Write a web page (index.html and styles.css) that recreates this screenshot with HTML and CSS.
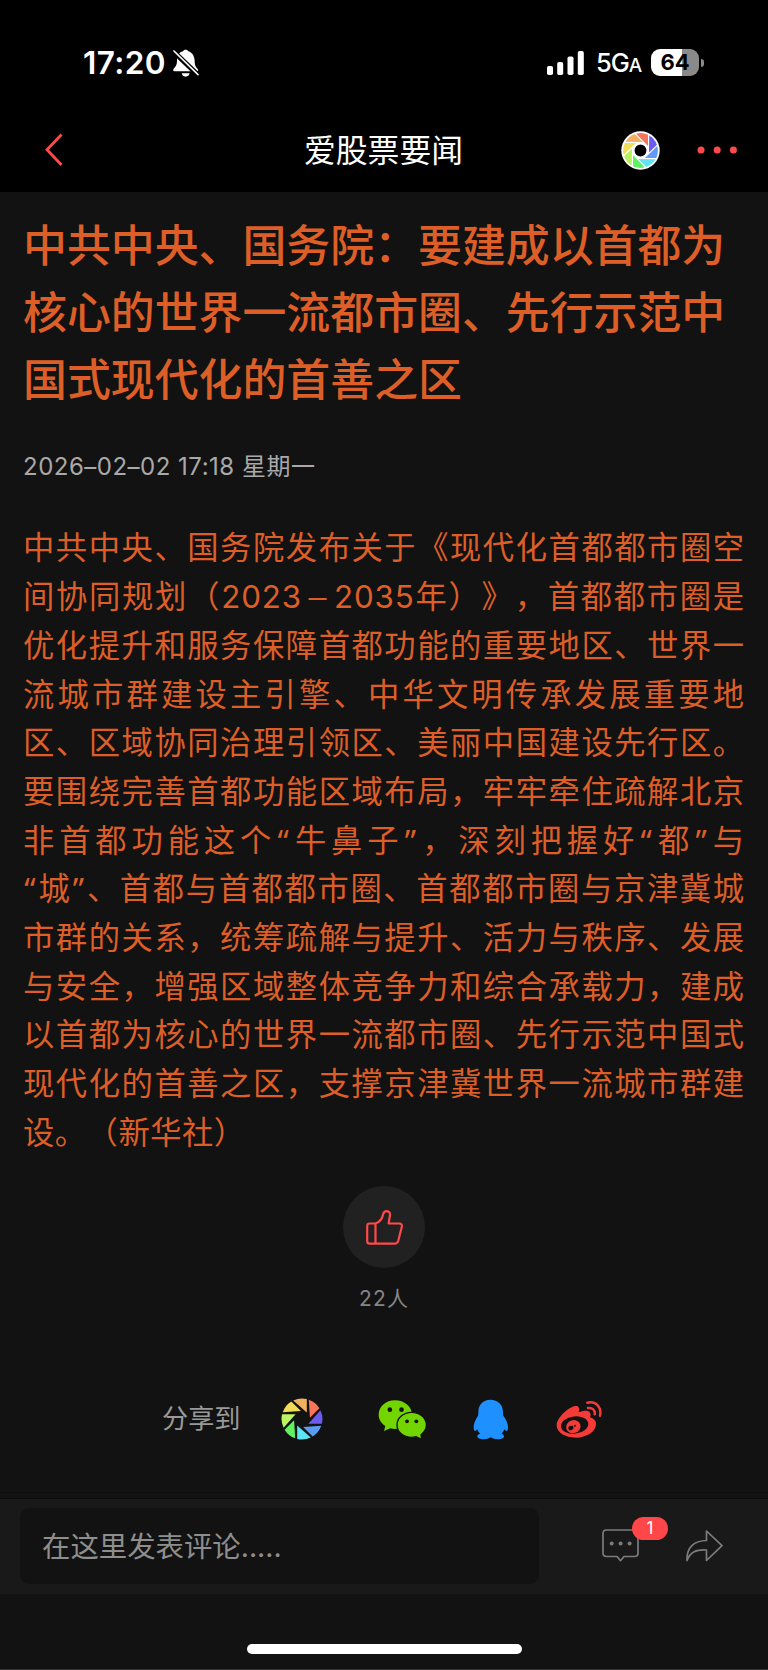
FILE: index.html
```html
<!DOCTYPE html>
<html lang="zh-CN">
<head>
    <meta charset="UTF-8">
    <meta name="viewport" content="width=device-width, initial-scale=1.0">
    <title>爱股票要闻</title>
    <link rel="stylesheet" href="styles.css">
</head>
<body>

    <!-- Barra de estado -->
    <div class="status-bar">
        <span class="status-time">17:20</span>
        <svg class="icon-bell" viewBox="0 0 78 84">
            <path fill="#fff" d="M38 2c4 0 7 2 8 5 13 4 18 15 19 29 0 13 3 18 9 24 3 4 1 7-3 7H5c-4 0-6-4-3-8 8-8 10-12 10-25C13 18 18 10 30 7c1-3 4-5 8-5zM26 73h24c-1 6-6 10-12 10s-11-4-12-10z"/>
            <path stroke="#000" stroke-width="15" d="M1 7l77 74"/>
            <path stroke="#fff" stroke-width="5" stroke-linecap="round" d="M3 6l72 71"/>
        </svg>
        <svg class="icon-signal" viewBox="0 0 37 24" fill="#fff">
            <rect x="0" y="15" width="6" height="9" rx="1.8"/>
            <rect x="10.2" y="11" width="6" height="13" rx="1.8"/>
            <rect x="20.5" y="5.5" width="6" height="18.5" rx="1.8"/>
            <rect x="30.8" y="0" width="6" height="24" rx="1.8"/>
        </svg>
        <span class="status-net">5G<small>A</small></span>
        <span class="battery">64</span>
        <span class="battery-tip"></span>
    </div>

    <!-- Cabecera -->
    <header class="navbar">
        <svg class="icon-back" viewBox="0 0 18 34">
            <path d="M16.500 1.500L2 16.700L16.500 32" fill="none" stroke="#ff4a4b" stroke-width="2.8"/>
        </svg>
        <h2 class="navbar-title">爱股票要闻</h2>
        <svg class="icon-moments" viewBox="-19.5 -19.5 39 39">
            <defs>
                <path id="blade" d="M-4.4-16.8A17.4 17.4 0 0 1 7.5-15.7V-4.500Z"/>
            </defs>
            <circle r="19.2" fill="#fff"/>
            <use href="#blade" fill="#f8745a"/>
            <use href="#blade" fill="#6a5af2" transform="rotate(45)"/>
            <use href="#blade" fill="#5e9af7" transform="rotate(90)"/>
            <use href="#blade" fill="#60e4f3" transform="rotate(135)"/>
            <use href="#blade" fill="#60f160" transform="rotate(180)"/>
            <use href="#blade" fill="#b9f05f" transform="rotate(225)"/>
            <use href="#blade" fill="#f2de5b" transform="rotate(270)"/>
            <use href="#blade" fill="#f1b063" transform="rotate(315)"/>
            <circle r="6.6" fill="#000" stroke="#fff" stroke-width="1.3"/>
        </svg>
        <svg class="icon-more" viewBox="0 0 40 8" fill="#ff4a4b">
            <circle cx="4" cy="4" r="3.5"/>
            <circle cx="20.2" cy="4" r="3.5"/>
            <circle cx="36.4" cy="4" r="3.5"/>
        </svg>
    </header>

    <!-- Noticia -->
    <main class="article">
        <h1>中共中央、国务院：要建成以首都为<br>核心的世界一流都市圈、先行示范中<br>国式现代化的首善之区</h1>
        <p class="date">2026–02–02 17:18 星期一</p>

        <p class="content">
            <span>中共中央、国务院发布关于《现代化首都都市圈空</span>
            <span>间协同规划（2023<i class="dash">－</i>2035年）》，首都都市圈是</span>
            <span>优化提升和服务保障首都功能的重要地区、世界一</span>
            <span>流城市群建设主引擎、中华文明传承发展重要地</span>
            <span>区、区域协同治理引领区、美丽中国建设先行区。</span>
            <span>要围绕完善首都功能区域布局，牢牢牵住疏解北京</span>
            <span>非首都功能这个<i>“</i>牛鼻子<i>”</i>，深刻把握好<i>“</i>都<i>”</i>与</span>
            <span><i>“</i>城<i>”</i>、首都与首都都市圈、首都都市圈与京津冀城</span>
            <span>市群的关系，统筹疏解与提升、活力与秩序、发展</span>
            <span>与安全，增强区域整体竞争力和综合承载力，建成</span>
            <span>以首都为核心的世界一流都市圈、先行示范中国式</span>
            <span>现代化的首善之区，支撑京津冀世界一流城市群建</span>
            <span class="last">设。（新华社）</span>
        </p>
    </main>

    <!-- Me gusta -->
    <div class="like">
        <div class="like-btn">
            <svg class="icon-like" viewBox="0 0 37 35" fill="none" stroke="#ff4a4b" stroke-width="2.2" stroke-linejoin="round">
                <path d="M9.5 13.5H3.6Q1.2 13.5 1.2 16V31.3Q1.2 33.7 3.6 33.7H28.5Q31.4 33.7 32.2 31L35.8 16.8Q36.4 13.5 33.2 13.5H22.6L24 5Q24.3 1.3 20.7 1.2Q18 1.2 17.2 4C16.3 8.5 14.5 12 9.5 13.5V33.7"/>
            </svg>
        </div>
        <span class="like-count">22人</span>
    </div>

    <!-- Compartir -->
    <div class="share">
        <span class="share-label">分享到</span>
        <svg class="icon-shutter" viewBox="-21 -21 42 42">
            <defs>
                <path id="blade2" d="M-8.8-18.4A20.4 20.4 0 0 1 4.8-19.9V-6.400Z"/>
            </defs>
            <use href="#blade2" fill="#f2b15f"/>
            <use href="#blade2" fill="#f77559" transform="rotate(45)"/>
            <use href="#blade2" fill="#6d5bf0" transform="rotate(90)"/>
            <use href="#blade2" fill="#5b9bf5" transform="rotate(135)"/>
            <use href="#blade2" fill="#5ce4f4" transform="rotate(180)"/>
            <use href="#blade2" fill="#60f060" transform="rotate(225)"/>
            <use href="#blade2" fill="#bcf362" transform="rotate(270)"/>
            <use href="#blade2" fill="#f2da58" transform="rotate(315)"/>
        </svg>
        <svg class="icon-wechat" viewBox="24 56 147 120">
            <path fill="#72d500" d="M75 60c28 0 51 19 51 43s-23 43-51 43c-5 0-10-1-14-2l-19 8 4-15c-12-8-20-20-20-34 0-24 21-43 49-43z"/>
            <circle cx="59.500" cy="88" r="7" fill="#121212"/>
            <circle cx="94.500" cy="88" r="7" fill="#121212"/>
            <path fill="#72d500" stroke="#121212" stroke-width="4" d="M125 96c25 0 44 17 44 38 0 12-7 22-16 29l2 14-17-8c-4 1-8 2-13 2-25 0-44-16-44-37s19-38 44-38z"/>
            <circle cx="111" cy="123" r="5.700" fill="#121212"/>
            <circle cx="139" cy="123" r="5.700" fill="#121212"/>
        </svg>
        <svg class="icon-qq" viewBox="310 57 105 123">
            <path fill="#1f90ff" d="M362 59c-22 0-36 15-36 37 0 5 0 7-1 11-8 13-13 23-13 34 0 7 1 11 4 12 3 0 5-3 7-5 2 6 4 9 8 13-5 2-8 4-8 8 0 6 8 9 18 9 9 0 17-2 22-6 5 4 13 6 22 6 10 0 18-3 18-9 0-4-3-6-7-8 4-4 6-8 8-13 2 2 4 5 7 5 3-1 4-5 4-12 0-11-5-21-14-34-1-4-1-6-1-11 0-22-15-37-38-37z"/>
        </svg>
        <svg class="icon-weibo" viewBox="560 60 138 114">
            <path fill="#f53b38" d="M562 136c0-20 30-50 52-57 13-4 18 3 14 18 13-5 29-8 34 1 3 5 2 10 0 14 11 4 18 9 18 20 0 23-28 41-60 41-33 0-58-15-58-37z"/>
            <ellipse cx="616" cy="135" rx="41" ry="26" fill="#121212" transform="rotate(-7 616 135)"/>
            <ellipse cx="612" cy="140" rx="22" ry="19.500" fill="#f53b38" transform="rotate(-18 612 140)"/>
            <ellipse cx="605" cy="144" rx="8" ry="6.500" fill="#121212" transform="rotate(-25 605 144)"/>
            <circle cx="617" cy="137" r="3" fill="#121212"/>
            <path fill="none" stroke="#f53b38" stroke-width="7.500" stroke-linecap="round" d="M654 68c24-6 44 12 38 39M656 84c13-2 22 6 20 19"/>
        </svg>
    </div>

    <!-- Barra de comentarios -->
    <footer class="comment-bar">
        <div class="comment-input">在这里发表评论.....</div>
        <div class="comment-icon">
            <svg viewBox="0 0 37 34" fill="none" stroke="#7c7c7c" stroke-width="1.7" stroke-linejoin="round">
                <path d="M4.500 1H32.500Q36 1 36 4.500V24Q36 27.500 32.500 27.500H22L18.500 31.700L15 27.500H4.500Q1 27.500 1 24V4.500Q1 1 4.500 1Z"/>
                <g fill="#7c7c7c" stroke="none">
                    <circle cx="9.700" cy="14.400" r="2"/>
                    <circle cx="18.600" cy="14.400" r="2"/>
                    <circle cx="27.600" cy="14.400" r="2"/>
                </g>
            </svg>
            <span class="badge">1</span>
        </div>
        <svg class="icon-forward" viewBox="0 0 37 32" fill="none" stroke="#7c7c7c" stroke-width="1.700" stroke-linejoin="round">
            <path d="M20.500 1L36 15.700L20.500 30.500V20C10 19.500 4.500 21.500 1 30.500C0.500 17.500 8 10.700 20.500 10.500Z"/>
        </svg>
    </footer>

    <div class="home-area">
        <div class="home-indicator"></div>
    </div>

</body>
</html>
```
FILE: styles.css
```css
/* Estilos generales */
* {
    box-sizing: border-box;
}

body {
    font-family: Inter, "Noto Sans CJK SC", sans-serif;
    margin: 0;
    padding: 0;
    height: 1670px;
    background-color: #121212;
    color: #fff;
    overflow: hidden;
    display: flex;
    flex-direction: column;
    text-spacing-trim: space-all;
}

svg {
    display: block;
    flex: none;
}

h1, h2, p {
    margin: 0;
}

/* Barra de estado */
.status-bar {
    height: 108px;
    padding: 17px 64px 0 83px;
    background-color: #000;
    display: flex;
    align-items: center;
    flex: none;
}

.status-time {
    width: 90px;
    font-size: 31.5px;
    font-weight: 600;
    letter-spacing: 0.4px;
    white-space: nowrap;
}

.icon-bell {
    width: 26px;
    height: 28px;
}

.icon-signal {
    width: 37px;
    height: 24px;
    margin-left: auto;
}

.status-net {
    width: 54px;
    margin-left: 12px;
    font-size: 25.5px;
    font-weight: 500;
    letter-spacing: -1px;
    white-space: nowrap;
}

.status-net small {
    font-size: 19px;
}

.battery {
    width: 48px;
    height: 27px;
    margin-left: 1px;
    border-radius: 9px;
    background: linear-gradient(90deg, #fff 65%, #8a8a8a 65%);
    color: #000;
    font-size: 22px;
    font-weight: 700;
    line-height: 27px;
    text-align: center;
}

.battery-tip {
    width: 3px;
    height: 8px;
    margin-left: 2px;
    border-radius: 0 4px 4px 0;
    background-color: #8a8a8a;
}

/* Cabecera */
.navbar {
    height: 84px;
    padding: 0 31px 0 45px;
    background-color: #000;
    display: flex;
    align-items: center;
    flex: none;
}

.icon-back {
    width: 18px;
    height: 34px;
}

.navbar-title {
    width: 160px;
    margin-left: 241px;
    padding-top: 2px;
    font-size: 31.8px;
    font-weight: 400;
    line-height: 44px;
    white-space: nowrap;
}

.icon-moments {
    width: 39px;
    height: 39px;
    margin-left: auto;
}

.icon-more {
    width: 40px;
    height: 8px;
    margin-left: 37px;
}

/* Noticia */
.article {
    height: 994px;
    padding: 21px 23px 0;
    flex: none;
}

h1 {
    color: #dd5f27;
    font-size: 43.9px;
    font-weight: 500;
    line-height: 66.8px;
    white-space: nowrap;
}

.date {
    margin-top: 36px;
    color: #a9a9a9;
    font-size: 24px;
    letter-spacing: 0.5px;
    line-height: 36px;
}

.content {
    margin-top: 39px;
    color: #dd5f27;
    font-size: 31.3px;
    line-height: 48.7px;
}

.content span {
    display: block;
    letter-spacing: 0.9px;
    text-align-last: justify;
    white-space: nowrap;
}

.content i {
    margin: 0 1.3px;
    font-family: "Noto Sans", sans-serif;
    font-style: normal;
    line-height: 1;
}

.content .dash {
    margin: 0 3px;
    font-family: "Noto Sans CJK SC", sans-serif;
    font-size: 25px;
    font-weight: 500;
}

.content .last {
    letter-spacing: 0.5px;
    text-align-last: left;
}

/* Me gusta */
.like {
    height: 192px;
    display: flex;
    flex-direction: column;
    align-items: center;
    flex: none;
}

.like-btn {
    width: 82px;
    height: 82px;
    border-radius: 50%;
    background-color: #212121;
    display: flex;
    justify-content: center;
    align-items: center;
}

.icon-like {
    width: 37px;
    height: 35px;
}

.like-count {
    margin-top: 16px;
    color: #858585;
    font-size: 21px;
    letter-spacing: 1.2px;
    line-height: 30px;
}

/* Compartir */
.share {
    height: 114px;
    padding-left: 162px;
    padding-bottom: 32px;
    display: flex;
    align-items: center;
    flex: none;
}

.share-label {
    width: 119px;
    color: #999;
    font-size: 26.2px;
    line-height: 36px;
}

.icon-shutter {
    width: 42px;
    height: 42px;
}

.icon-wechat {
    width: 49px;
    height: 40px;
    margin-left: 55px;
}

.icon-qq {
    width: 35px;
    height: 41px;
    margin-left: 46px;
}

.icon-weibo {
    width: 46px;
    height: 38px;
    margin-left: 48px;
}

/* Barra de comentarios */
.comment-bar {
    height: 102px;
    padding: 5px 45px 0 20px;
    border-top: 1px solid #0b0b0b;
    background: linear-gradient(#121212 0, #121212 5px, #0b0b0b 5px, #0b0b0b 6px, #191919 6px);
    display: flex;
    align-items: center;
    flex: none;
}

.comment-input {
    width: 519px;
    height: 76px;
    padding-left: 22px;
    border-radius: 9px;
    background-color: #121212;
    color: #8e8e8e;
    font-size: 28.4px;
    line-height: 78px;
}

.comment-icon {
    position: relative;
    margin-left: 63px;
}

.comment-icon svg {
    width: 37px;
    height: 34px;
}

.badge {
    position: absolute;
    top: -12px;
    left: 30px;
    width: 36px;
    height: 23px;
    border-radius: 12px;
    background-color: #ff4649;
    font-size: 17px;
    line-height: 23px;
    text-align: center;
}

.icon-forward {
    width: 37px;
    height: 32px;
    margin-left: auto;
}

/* Indicador inferior */
.home-area {
    flex: 1;
    padding-top: 50px;
    border-bottom: 1px solid #333;
}

.home-indicator {
    width: 275px;
    height: 10px;
    margin: 0 auto;
    border-radius: 5px;
    background-color: #fff;
}
```
